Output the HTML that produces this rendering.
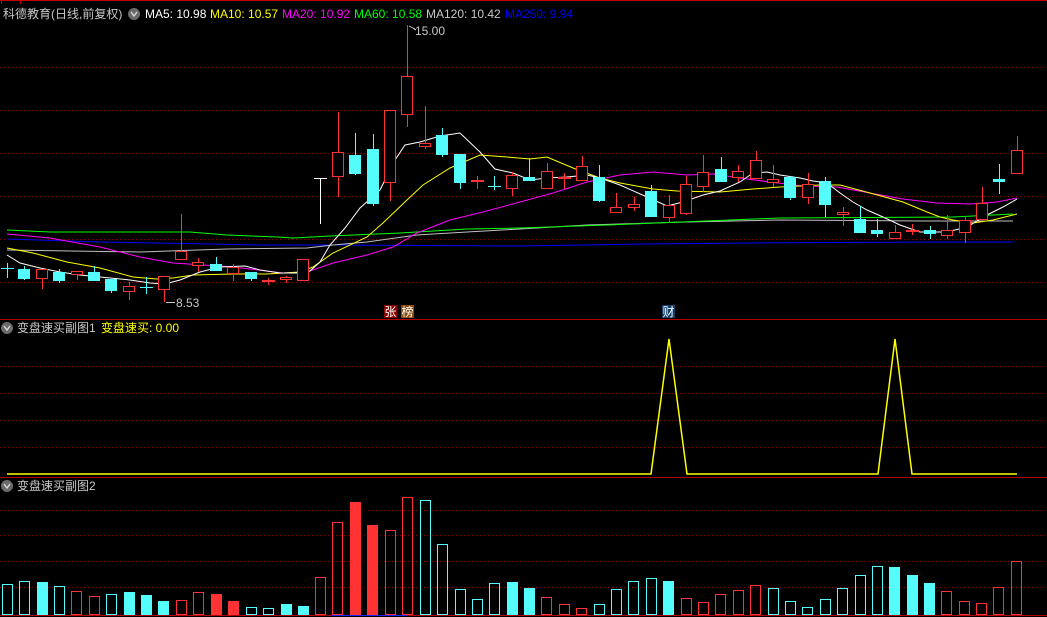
<!DOCTYPE html>
<html><head><meta charset="utf-8"><style>
html,body{margin:0;padding:0;background:#000;width:1047px;height:617px;overflow:hidden}
svg{display:block}
text{font-family:"Liberation Sans","Noto Sans CJK SC",sans-serif}
</style></head><body>
<svg width="1047" height="617" viewBox="0 0 1047 617" xmlns="http://www.w3.org/2000/svg" shape-rendering="crispEdges">
<rect width="1047" height="617" fill="#000"/>
<line x1="0" y1="0.5" x2="1047" y2="0.5" stroke="#c00000"/>
<line x1="1.5" y1="0" x2="1.5" y2="4" stroke="#c00000"/>
<line x1="20.5" y1="0" x2="20.5" y2="4" stroke="#c00000"/>
<g stroke="#8a0000" stroke-dasharray="1,3">
<line x1="0" y1="67.5" x2="1047" y2="67.5"/><line x1="0" y1="110.5" x2="1047" y2="110.5"/>
<line x1="0" y1="153.5" x2="1047" y2="153.5"/><line x1="0" y1="196.5" x2="1047" y2="196.5"/>
<line x1="0" y1="239.5" x2="1047" y2="239.5"/><line x1="0" y1="282.5" x2="1047" y2="282.5"/>
<line x1="0" y1="366.5" x2="1047" y2="366.5"/><line x1="0" y1="393.5" x2="1047" y2="393.5"/>
<line x1="0" y1="420.5" x2="1047" y2="420.5"/><line x1="0" y1="447.5" x2="1047" y2="447.5"/>
<line x1="0" y1="510.5" x2="1047" y2="510.5"/><line x1="0" y1="535.5" x2="1047" y2="535.5"/>
<line x1="0" y1="561.5" x2="1047" y2="561.5"/><line x1="0" y1="587.5" x2="1047" y2="587.5"/>
</g>
<line x1="0" y1="319.5" x2="1047" y2="319.5" stroke="#b00000"/>
<line x1="0" y1="477.5" x2="1047" y2="477.5" stroke="#b00000"/>
<line x1="0" y1="615.5" x2="1047" y2="615.5" stroke="#b00000"/>
<line x1="332" y1="615.5" x2="408" y2="615.5" stroke="#2020ff"/>

<g fill="none" stroke-width="1" shape-rendering="auto">
<polyline stroke="#0000ff" points="7,239 100,242 157,243 260,245 333,245 520,246 643,244 747,243 937,242 1013,242"/>
<polyline stroke="#c0c0c0" points="7,250 140,252 227,249 307,248 333,245 367,242 417,235 467,232 520,229 587,225 687,222 780,220 920,221 1013,221"/>
<polyline stroke="#00ff00" points="7,230 50,232 190,232 227,235 277,237 293,238 330,236 400,233 467,229 520,228 607,225 730,220 780,218 953,217 1013,214"/>
<polyline stroke="#ff00ff" points="7,234 50,238 100,247 140,257 173,263 233,267 283,273 307,272 333,263 367,255 393,247 417,233 450,220 483,212 520,202 553,193 587,182 620,175 653,172 687,175 713,174 740,178 770,182 803,186 837,187 870,193 903,199 937,203 970,204 997,202 1017,198"/>
<polyline stroke="#ffff00" points="7,248 33,253 67,262 100,268 133,277 157,279 173,278 193,275 233,274 267,274 300,272 313,267 333,253 367,237 383,223 407,200 423,185 450,168 480,155 507,157 530,159 547,157 573,168 600,178 620,183 653,189 677,191 720,192 753,189 780,187 820,185 840,185 870,193 903,202 927,212 940,217 953,220 973,223 993,220 1017,214"/>
<polyline stroke="#ffffff" points="7,255 20,263 40,268 60,272 80,275 100,277 130,280 150,283 165,284 180,280 200,272 220,267 245,266 260,270 280,273 300,273 310,271 320,262 330,245 345,228 360,208 380,190 395,160 405,145 420,142 440,136 460,133 480,152 495,169 513,173 530,180 547,178 567,177 587,175 600,178 620,185 647,197 667,206 683,202 703,195 720,191 740,182 753,173 767,172 780,175 800,178 813,181 827,183 840,193 853,202 867,210 883,217 900,225 920,232 947,232 967,227 987,215 1003,207 1017,199"/>
</g>

<g stroke-width="1">
<g stroke="#ff3333">
<line x1="42.5" y1="269" x2="42.5" y2="289"/><line x1="77.5" y1="271" x2="77.5" y2="280"/>
<line x1="129.5" y1="282" x2="129.5" y2="300"/><line x1="164.5" y1="276" x2="164.5" y2="302"/>
<line x1="181.5" y1="214" x2="181.5" y2="259"/><line x1="198.5" y1="258" x2="198.5" y2="272"/>
<line x1="233.5" y1="264" x2="233.5" y2="281"/><line x1="268.5" y1="278" x2="268.5" y2="285"/>
<line x1="286.5" y1="276" x2="286.5" y2="283"/><line x1="303.5" y1="259" x2="303.5" y2="280"/>
<line x1="338.5" y1="112" x2="338.5" y2="197"/><line x1="390.5" y1="110" x2="390.5" y2="201"/>
<line x1="407.5" y1="25" x2="407.5" y2="127"/><line x1="425.5" y1="106" x2="425.5" y2="149"/>
<line x1="477.5" y1="176" x2="477.5" y2="189"/><line x1="512.5" y1="172" x2="512.5" y2="196"/>
<line x1="547.5" y1="163" x2="547.5" y2="188"/><line x1="564.5" y1="173" x2="564.5" y2="189"/>
<line x1="582.5" y1="156" x2="582.5" y2="180"/><line x1="616.5" y1="193" x2="616.5" y2="212"/>
<line x1="634.5" y1="197" x2="634.5" y2="211"/><line x1="669.5" y1="195" x2="669.5" y2="223"/>
<line x1="686.5" y1="176" x2="686.5" y2="215"/><line x1="703.5" y1="155" x2="703.5" y2="192"/>
<line x1="738.5" y1="165" x2="738.5" y2="182"/><line x1="756.5" y1="151" x2="756.5" y2="178"/>
<line x1="773.5" y1="165" x2="773.5" y2="187"/><line x1="808.5" y1="173" x2="808.5" y2="204"/>
<line x1="843.5" y1="207" x2="843.5" y2="226"/><line x1="895.5" y1="225" x2="895.5" y2="239"/>
<line x1="912.5" y1="224" x2="912.5" y2="235"/><line x1="947.5" y1="215" x2="947.5" y2="239"/>
<line x1="965.5" y1="216" x2="965.5" y2="243"/><line x1="982.5" y1="187" x2="982.5" y2="219"/>
<line x1="1017.5" y1="136" x2="1017.5" y2="173"/>
</g>
<g stroke="#54fcfc">
<line x1="7.5" y1="263" x2="7.5" y2="278"/><line x1="24.5" y1="266" x2="24.5" y2="280"/>
<line x1="59.5" y1="269" x2="59.5" y2="283"/><line x1="94.5" y1="266" x2="94.5" y2="281"/>
<line x1="111.5" y1="279" x2="111.5" y2="293"/><line x1="146.5" y1="277" x2="146.5" y2="294"/>
<line x1="216.5" y1="257" x2="216.5" y2="271"/><line x1="251.5" y1="272" x2="251.5" y2="281"/>
<line x1="355.5" y1="133" x2="355.5" y2="175"/><line x1="373.5" y1="134" x2="373.5" y2="206"/>
<line x1="442.5" y1="128" x2="442.5" y2="157"/><line x1="460.5" y1="154" x2="460.5" y2="189"/>
<line x1="494.5" y1="176" x2="494.5" y2="190"/><line x1="529.5" y1="158" x2="529.5" y2="181"/>
<line x1="599.5" y1="165" x2="599.5" y2="202"/><line x1="651.5" y1="185" x2="651.5" y2="217"/>
<line x1="721.5" y1="157" x2="721.5" y2="181"/><line x1="790.5" y1="176" x2="790.5" y2="200"/>
<line x1="825.5" y1="177" x2="825.5" y2="217"/><line x1="860.5" y1="206" x2="860.5" y2="232"/>
<line x1="877.5" y1="219" x2="877.5" y2="237"/><line x1="930.5" y1="226" x2="930.5" y2="239"/>
<line x1="999.5" y1="164" x2="999.5" y2="194"/>
</g>
<g stroke="#54fcfc">
<line x1="1" y1="268.5" x2="14" y2="268.5"/><line x1="140" y1="287.5" x2="153" y2="287.5"/>
<line x1="488" y1="186.5" x2="501" y2="186.5"/>
</g>
<g stroke="#ff3333" stroke-width="2">
<line x1="471" y1="181" x2="484" y2="181"/><line x1="558" y1="178" x2="571" y2="178"/>
<line x1="262" y1="281" x2="275" y2="281"/><line x1="906" y1="231" x2="919" y2="231"/>
</g>
<line x1="314" y1="178.5" x2="327" y2="178.5" stroke="#fff"/>
<line x1="320.5" y1="178" x2="320.5" y2="224" stroke="#fff"/>
<g stroke="#ff3333" fill="#000">
<rect x="36.5" y="269.5" width="11" height="9"/><rect x="71.5" y="271.5" width="11" height="3"/>
<rect x="123.5" y="286.5" width="11" height="5"/><rect x="158.5" y="276.5" width="11" height="13"/>
<rect x="175.5" y="251.5" width="11" height="8"/><rect x="192.5" y="262.5" width="11" height="3"/>
<rect x="227.5" y="267.5" width="11" height="6"/><rect x="280.5" y="277.5" width="11" height="2"/>
<rect x="297.5" y="259.5" width="11" height="21"/><rect x="332.5" y="152.5" width="11" height="24"/>
<rect x="384.5" y="110.5" width="11" height="72"/><rect x="401.5" y="76.5" width="11" height="38"/>
<rect x="419.5" y="143.5" width="11" height="3"/><rect x="506.5" y="175.5" width="11" height="13"/>
<rect x="541.5" y="171.5" width="11" height="17"/><rect x="576.5" y="166.5" width="11" height="14"/>
<rect x="610.5" y="207.5" width="11" height="5"/><rect x="628.5" y="204.5" width="11" height="3"/>
<rect x="663.5" y="205.5" width="11" height="12"/><rect x="680.5" y="184.5" width="11" height="29"/>
<rect x="697.5" y="172.5" width="11" height="14"/><rect x="732.5" y="171.5" width="11" height="6"/>
<rect x="750.5" y="160.5" width="11" height="18"/><rect x="767.5" y="179.5" width="11" height="3"/>
<rect x="802.5" y="184.5" width="11" height="13"/><rect x="837.5" y="212.5" width="11" height="2"/>
<rect x="889.5" y="232.5" width="11" height="6"/><rect x="941.5" y="230.5" width="11" height="5"/>
<rect x="959.5" y="220.5" width="11" height="12"/><rect x="976.5" y="203.5" width="11" height="16"/>
<rect x="1011.5" y="150.5" width="11" height="23"/>
</g>
<g fill="#54fcfc">
<rect x="18" y="269" width="12" height="10"/><rect x="53" y="272" width="12" height="9"/>
<rect x="88" y="272" width="12" height="9"/><rect x="105" y="279" width="12" height="12"/>
<rect x="210" y="264" width="12" height="7"/><rect x="245" y="272" width="12" height="7"/>
<rect x="349" y="155" width="12" height="19"/><rect x="367" y="149" width="12" height="55"/>
<rect x="436" y="135" width="12" height="20"/><rect x="454" y="154" width="12" height="29"/>
<rect x="523" y="177" width="12" height="4"/><rect x="593" y="177" width="12" height="24"/>
<rect x="645" y="191" width="12" height="26"/><rect x="715" y="169" width="12" height="13"/>
<rect x="784" y="177" width="12" height="21"/><rect x="819" y="181" width="12" height="24"/>
<rect x="854" y="219" width="12" height="14"/><rect x="871" y="230" width="12" height="4"/>
<rect x="924" y="230" width="12" height="4"/><rect x="993" y="179" width="12" height="3"/>
</g>
</g>
<g fill="#c8c8c8" font-size="12">
<text x="415" y="35">15.00</text>
<text x="176" y="307">8.53</text>
</g>
<polyline points="409,26 413,28 416,30" fill="none" stroke="#c8c8c8"/>
<line x1="166" y1="302.5" x2="175" y2="302.5" stroke="#c8c8c8"/>

<rect x="384" y="305" width="13" height="13" fill="#8b0000"/>
<rect x="401" y="305" width="13" height="13" fill="#8b4a10"/>
<rect x="662" y="305" width="13" height="13" fill="#10406e"/>
<g font-size="12" fill="#fff">
<text x="384.5" y="316">张</text><text x="401.5" y="316">榜</text><text x="662.5" y="316">财</text>
</g>

<g font-size="12">
<text x="3" y="18" fill="#c8c8c8">科德教育(日线,前复权)</text>
<circle cx="134" cy="14" r="6" fill="#6a6a6a"/>
<path d="M131,12 L134,16 L137,12" stroke="#ddd" fill="none" stroke-width="1.3" shape-rendering="auto"/>
<text x="145" y="18" fill="#ffffff">MA5: 10.98</text>
<text x="210" y="18" fill="#ffff00">MA10: 10.57</text>
<text x="282" y="18" fill="#ff00ff">MA20: 10.92</text>
<text x="354" y="18" fill="#00ff00">MA60: 10.58</text>
<text x="426" y="18" fill="#c8c8c8">MA120: 10.42</text>
<text x="505" y="18" fill="#0000ff">MA250: 9.94</text>
</g>

<circle cx="7" cy="328" r="6" fill="#6a6a6a"/>
<path d="M4,326 L7,330 L10,326" stroke="#ddd" fill="none" stroke-width="1.3" shape-rendering="auto"/>
<text x="17" y="332" font-size="12" fill="#c8c8c8">变盘速买副图1</text>
<text x="101" y="332" font-size="12" fill="#ffff00">变盘速买: 0.00</text>
<polyline fill="none" stroke="#ffff00" stroke-width="1.5" shape-rendering="auto" points="7,474 651,474 669,339 687,474 878,474 895,339 912,474 1017,474"/>

<circle cx="7" cy="486" r="6" fill="#6a6a6a"/>
<path d="M4,484 L7,488 L10,484" stroke="#ddd" fill="none" stroke-width="1.3" shape-rendering="auto"/>
<text x="17" y="490" font-size="12" fill="#c8c8c8">变盘速买副图2</text>
<g stroke="#54fcfc" fill="none">
<rect x="2.5" y="584.5" width="10" height="30"/><rect x="19.5" y="581.5" width="10" height="33"/>
<rect x="54.5" y="586.5" width="10" height="28"/><rect x="106.5" y="594.5" width="10" height="20"/>
<rect x="246.5" y="607.5" width="10" height="7"/><rect x="263.5" y="608.5" width="10" height="6"/>
<rect x="420.5" y="500.5" width="10" height="114"/><rect x="437.5" y="544.5" width="10" height="70"/>
<rect x="455.5" y="589.5" width="10" height="25"/><rect x="472.5" y="599.5" width="10" height="15"/>
<rect x="489.5" y="583.5" width="10" height="31"/><rect x="594.5" y="604.5" width="10" height="10"/>
<rect x="611.5" y="589.5" width="10" height="25"/><rect x="628.5" y="581.5" width="10" height="33"/>
<rect x="646.5" y="578.5" width="10" height="36"/><rect x="768.5" y="588.5" width="10" height="26"/>
<rect x="785.5" y="601.5" width="10" height="13"/><rect x="802.5" y="607.5" width="10" height="7"/>
<rect x="820.5" y="599.5" width="10" height="15"/><rect x="837.5" y="588.5" width="10" height="26"/>
<rect x="855.5" y="575.5" width="10" height="39"/><rect x="872.5" y="566.5" width="10" height="48"/>
</g>
<g fill="#54fcfc">
<rect x="37" y="582" width="11" height="33"/><rect x="124" y="592" width="11" height="23"/>
<rect x="141" y="595" width="11" height="20"/><rect x="158" y="601" width="11" height="14"/>
<rect x="281" y="604" width="11" height="11"/><rect x="298" y="606" width="11" height="9"/>
<rect x="507" y="582" width="11" height="33"/><rect x="524" y="588" width="11" height="27"/>
<rect x="663" y="581" width="11" height="34"/><rect x="889" y="567" width="11" height="48"/>
<rect x="907" y="575" width="11" height="40"/><rect x="924" y="583" width="11" height="32"/>
</g>
<g stroke="#ff3333" fill="none">
<rect x="71.5" y="591.5" width="10" height="23"/><rect x="89.5" y="596.5" width="10" height="18"/>
<rect x="176.5" y="600.5" width="10" height="14"/><rect x="193.5" y="592.5" width="10" height="22"/>
<rect x="315.5" y="577.5" width="10" height="37"/><rect x="332.5" y="522.5" width="10" height="92"/>
<rect x="385.5" y="530.5" width="10" height="84"/><rect x="402.5" y="497.5" width="10" height="117"/>
<rect x="541.5" y="597.5" width="10" height="17"/><rect x="559.5" y="604.5" width="10" height="10"/>
<rect x="576.5" y="608.5" width="10" height="6"/><rect x="681.5" y="598.5" width="10" height="16"/>
<rect x="698.5" y="602.5" width="10" height="12"/><rect x="715.5" y="594.5" width="10" height="20"/>
<rect x="733.5" y="590.5" width="10" height="24"/><rect x="750.5" y="585.5" width="10" height="29"/>
<rect x="941.5" y="591.5" width="10" height="23"/><rect x="959.5" y="601.5" width="10" height="13"/>
<rect x="976.5" y="603.5" width="10" height="11"/><rect x="993.5" y="587.5" width="10" height="27"/>
<rect x="1011.5" y="561.5" width="10" height="53"/>
</g>
<g fill="#ff3333">
<rect x="211" y="594" width="11" height="21"/><rect x="228" y="601" width="11" height="14"/>
<rect x="350" y="502" width="11" height="113"/><rect x="367" y="525" width="11" height="90"/>
</g>
</svg>
</body></html>
